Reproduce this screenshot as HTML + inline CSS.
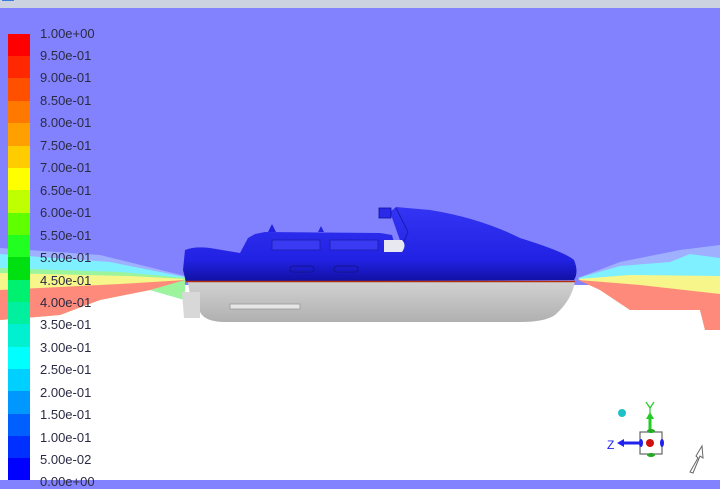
<!DOCTYPE html>
<html><head><meta charset="utf-8"><style>
body{margin:0;width:720px;height:480px;overflow:hidden;background:#8282fe;font-family:"Liberation Sans",sans-serif;position:relative}
.top{position:absolute;left:0;top:0;width:720px;height:8px;background:#ccd2df}
.lbl{position:absolute;left:40px;font-size:13px;color:#2a2a44;line-height:14px}
</style></head><body>
<div class="top"><div style="position:absolute;left:2px;top:0;width:12px;height:1px;background:#3a7be0"></div></div>
<svg width="720" height="480" style="position:absolute;left:0;top:0">
<defs>
<linearGradient id="hull" x1="0" y1="0" x2="0" y2="1"><stop offset="0" stop-color="#d2d2d2"/><stop offset="1" stop-color="#b0b0b0"/></linearGradient>
<linearGradient id="deck" x1="0" y1="0" x2="0" y2="1"><stop offset="0" stop-color="#3434f4"/><stop offset="0.7" stop-color="#2222e4"/><stop offset="1" stop-color="#1010a0"/></linearGradient>
</defs>
<rect x="0" y="285" width="720" height="195" fill="#ffffff"/>
<path d="M0,248 L100,255 L185,276 L185,300 L150,290 L100,300 L60,315 L0,320 Z" fill="#9fb0ff"/>
<path d="M0,254 L110,262 L185,277 L185,300 L150,290 L100,300 L60,315 L0,320 Z" fill="#7ff0ff"/>
<path d="M0,268 L120,272 L185,278 L185,300 L150,290 L100,300 L60,315 L0,320 Z" fill="#9cf59c"/>
<path d="M0,273 L130,276 L185,279 L150,290 L100,300 L60,315 L0,320 Z" fill="#f6f68a"/>
<path d="M0,290 L120,284 L185,280 L150,290 L100,300 L60,315 L25,318 L0,320 Z" fill="#fd8a7a"/>
<path d="M578,278 L620,262 L680,250 L720,245 L720,330 L705,330 L700,310 L630,310 L600,290 Z" fill="#9fb0ff"/>
<path d="M578,278 L620,266 L670,262 L690,254 L720,258 L720,330 L705,330 L700,310 L630,310 L600,290 Z" fill="#7ff0ff"/>
<path d="M578,279 L630,275 L720,276 L720,330 L705,330 L700,310 L630,310 L600,290 Z" fill="#f6f68a"/>
<path d="M578,280 L640,285 L720,294 L720,330 L705,330 L700,310 L630,310 L600,290 Z" fill="#fd8a7a"/>
<path d="M188,282 L575,281 Q572,300 555,315 Q545,322 520,322 L225,322 Q205,322 200,312 L190,295 Z" fill="url(#hull)"/>
<path d="M182,292 L200,292 L200,318 L184,318 Z" fill="#d8d8d8"/>
<rect x="230" y="304" width="70" height="5" fill="#e6e6e6" stroke="#999" stroke-width="0.8"/>
<path d="M185,250 Q195,246 210,248 L240,253 L248,238 L255,234 L265,232 L380,233 L392,235 L395,246 L402,246 L390,212 L396,207 L430,210 Q480,218 520,238 Q565,252 574,260 Q579,272 574,280 L186,282 L183,270 Z" fill="url(#deck)"/>
<path d="M396,208 L408,232 L402,246" fill="none" stroke="#1a1ab0" stroke-width="1"/>
<path d="M268,232 L272,224 L276,232 Z M318,232 L321,226 L324,232 Z" fill="#2222e0"/>
<rect x="379" y="208" width="12" height="10" fill="#2a2ae8" stroke="#1010a0" stroke-width="0.8"/>
<path d="M272,240 L320,240 L320,250 L272,250 Z M330,240 L378,240 L378,250 L330,250 Z" fill="#3a3af2" stroke="#1c1cb0" stroke-width="0.8"/>
<path d="M384,240 L402,240 Q407,245 402,252 L384,252 Z" fill="#e8e8f0"/>
<rect x="290" y="266" width="24" height="6" rx="3" fill="none" stroke="#151590" stroke-width="1"/>
<rect x="334" y="266" width="24" height="6" rx="3" fill="none" stroke="#151590" stroke-width="1"/>
<line x1="186" y1="281.5" x2="575" y2="281.5" stroke="#b03010" stroke-width="1.5"/>
<g>
<rect x="8" y="34" width="22" height="23" fill="#ff0000"/>
<rect x="8" y="56" width="22" height="23" fill="#ff2800"/>
<rect x="8" y="78" width="22" height="23" fill="#ff5000"/>
<rect x="8" y="101" width="22" height="23" fill="#ff7800"/>
<rect x="8" y="123" width="22" height="23" fill="#ffa000"/>
<rect x="8" y="146" width="22" height="23" fill="#ffcc00"/>
<rect x="8" y="168" width="22" height="23" fill="#ffff00"/>
<rect x="8" y="190" width="22" height="23" fill="#c0ff00"/>
<rect x="8" y="213" width="22" height="23" fill="#60ff00"/>
<rect x="8" y="235" width="22" height="23" fill="#20ff20"/>
<rect x="8" y="257" width="22" height="23" fill="#00e010"/>
<rect x="8" y="280" width="22" height="23" fill="#00f070"/>
<rect x="8" y="302" width="22" height="23" fill="#00f0a0"/>
<rect x="8" y="324" width="22" height="23" fill="#00f0d0"/>
<rect x="8" y="347" width="22" height="23" fill="#00ffff"/>
<rect x="8" y="369" width="22" height="23" fill="#00d0ff"/>
<rect x="8" y="391" width="22" height="23" fill="#0098ff"/>
<rect x="8" y="414" width="22" height="23" fill="#0060ff"/>
<rect x="8" y="436" width="22" height="23" fill="#0030ff"/>
<rect x="8" y="458" width="22" height="23" fill="#0000ff"/>
</g>
<circle cx="622" cy="413" r="4" fill="#20c0c8"/>
<rect x="640" y="432" width="22" height="22" fill="#fff" stroke="#666" stroke-width="1.2"/>
<path d="M650,417 L650,432" stroke="#22cc22" stroke-width="3"/>
<path d="M646,419 L650,412 L654,419 Z" fill="#22cc22"/>
<path d="M646,402 L650,408 L654,402 M650,408 L650,413" stroke="#22cc22" stroke-width="1.2" fill="none"/>
<path d="M622,443 L640,443" stroke="#2222ee" stroke-width="3"/>
<path d="M624,439 L617,443 L624,447 Z" fill="#2222ee"/>
<text x="607" y="449" font-size="12" fill="#2222ee">Z</text>
<circle cx="650" cy="443" r="4" fill="#d01010"/>
<ellipse cx="641" cy="443" rx="2" ry="4" fill="#2222ee"/>
<ellipse cx="662" cy="443" rx="2" ry="4" fill="#2222ee"/>
<ellipse cx="651" cy="431" rx="4" ry="2" fill="#22aa22"/>
<ellipse cx="651" cy="455" rx="4" ry="2" fill="#22aa22"/>
<path d="M690,472 L698,458 L696,456 L702,446 L703,458 L700,456 L693,473 Z" fill="#fff" stroke="#666" stroke-width="1"/>
</svg>
<div class="lbl" style="top:27px">1.00e+00</div>
<div class="lbl" style="top:49px">9.50e-01</div>
<div class="lbl" style="top:71px">9.00e-01</div>
<div class="lbl" style="top:94px">8.50e-01</div>
<div class="lbl" style="top:116px">8.00e-01</div>
<div class="lbl" style="top:139px">7.50e-01</div>
<div class="lbl" style="top:161px">7.00e-01</div>
<div class="lbl" style="top:184px">6.50e-01</div>
<div class="lbl" style="top:206px">6.00e-01</div>
<div class="lbl" style="top:229px">5.50e-01</div>
<div class="lbl" style="top:251px">5.00e-01</div>
<div class="lbl" style="top:274px">4.50e-01</div>
<div class="lbl" style="top:296px">4.00e-01</div>
<div class="lbl" style="top:318px">3.50e-01</div>
<div class="lbl" style="top:341px">3.00e-01</div>
<div class="lbl" style="top:363px">2.50e-01</div>
<div class="lbl" style="top:386px">2.00e-01</div>
<div class="lbl" style="top:408px">1.50e-01</div>
<div class="lbl" style="top:431px">1.00e-01</div>
<div class="lbl" style="top:453px">5.00e-02</div>
<div class="lbl" style="top:475px">0.00e+00</div>
</body></html>
